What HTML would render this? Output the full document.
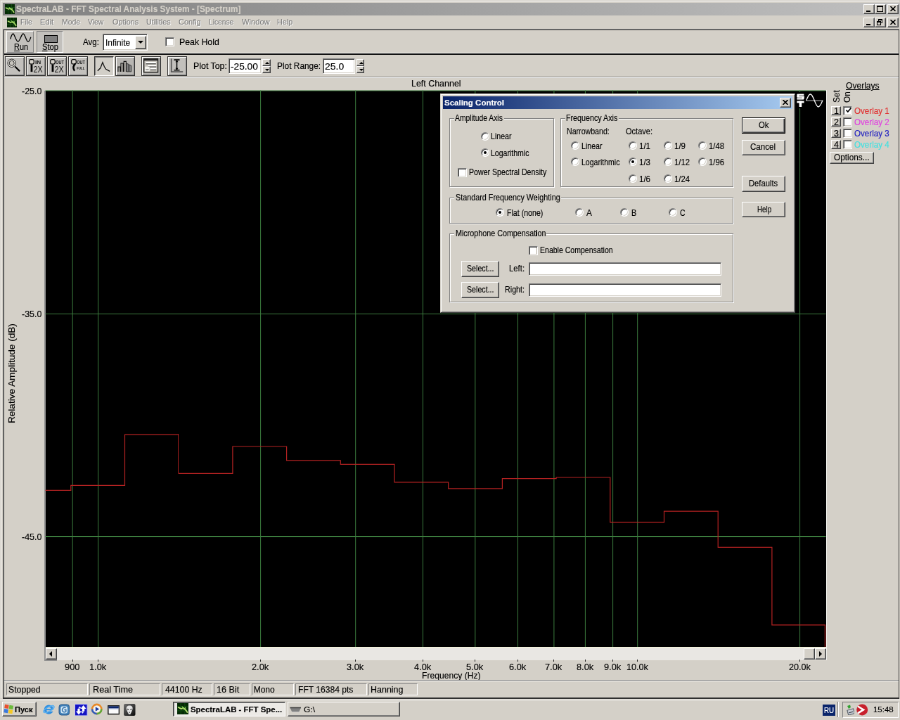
<!DOCTYPE html>
<html><head><meta charset="utf-8">
<style>
*{box-sizing:border-box;margin:0;padding:0}
html,body{width:900px;height:720px;overflow:hidden;background:#d4d0c8}
#root{position:absolute;left:0;top:0;width:1280px;height:1024px;overflow:hidden;background:#d4d0c8;transform:scale(0.703125);transform-origin:0 0;will-change:transform;font-family:"Liberation Sans",sans-serif;font-size:12px;color:#000}
.a{position:absolute}
.t{position:absolute;white-space:nowrap;transform-origin:0 50%;-webkit-text-stroke:0.15px currentColor}
.btn{background:#d4d0c8;border:1px solid;border-color:#fff #404040 #404040 #fff;box-shadow:inset -1px -1px 0 #808080, inset 1px 1px 0 #d4d0c8}
.btnd{background:#d4d0c8;border:1px solid #000;box-shadow:inset 1px 1px 0 #fff, inset -1px -1px 0 #404040, inset -2px -2px 0 #808080}
.sunk{background:#fff;border:1px solid;border-color:#808080 #fff #fff #808080;box-shadow:inset 1px 1px 0 #404040, inset -1px -1px 0 #d4d0c8}
.sunk1{border:1px solid;border-color:#808080 #fff #fff #808080}
.rais1{border:1px solid;border-color:#fff #808080 #808080 #fff}
.dis{color:#808080;text-shadow:1px 1px 0 #fff}
.grp{border:1px solid #808080;box-shadow:1px 1px 0 #fff, inset 1px 1px 0 #fff}
.radio{width:12px;height:12px;border-radius:50%;background:#fff;border:1px solid;border-color:#808080 #fff #fff #808080;box-shadow:inset 1px 1px 0 #404040, inset -1px -1px 0 #d4d0c8}
.radio.on::after{content:"";position:absolute;left:3px;top:3px;width:4px;height:4px;border-radius:50%;background:#000}
.chk{width:13px;height:13px;background:#fff;border:1px solid;border-color:#808080 #fff #fff #808080;box-shadow:inset 1px 1px 0 #404040, inset -1px -1px 0 #d4d0c8}
.tb{background:#c6c3bc;border:1px solid;border-color:#fff #404040 #404040 #fff;box-shadow:inset -1px -1px 0 #808080}
</style></head><body><div id="root">
<div class="a" style="left:1px;top:1px;width:1278px;height:1px;background:#fff"></div>
<div class="a" style="left:1px;top:1px;width:1px;height:992px;background:#fff"></div>
<div class="a" style="left:4px;top:4px;width:1276px;height:18px;background:linear-gradient(90deg,#808080,#c0c0c0)"></div>
<svg class="a" style="left:7px;top:6px" width="14" height="14"><rect width="14" height="14" fill="#052a05"/><path d="M0 4.5H14M0 9.5H14M4.5 0V14M9.5 0V14" stroke="#0f4a0f" stroke-width="1" fill="none"/><path d="M1 5L5 7L8 6L11 9L13 12" stroke="#b8e070" stroke-width="1.6" fill="none"/><path d="M6 4L8 8M10 5L11 9" stroke="#7fd04f" stroke-width="1" fill="none"/></svg>
<div class="t " style="left:22.5px;top:5.3px;font-size:12px;line-height:16px;transform:scaleX(0.985);font-weight:bold;color:#d4d0c8;">SpectraLAB - FFT Spectral Analysis System - [Spectrum]</div>
<div class="a btn" style="left:1228px;top:6px;width:16px;height:14px"></div>
<div class="a" style="left:1232px;top:15px;width:6px;height:2px;background:#000"></div>
<div class="a btn" style="left:1244px;top:6px;width:16px;height:14px"></div>
<div class="a" style="left:1247px;top:8px;width:9px;height:9px;border:1px solid #000;border-top-width:2px"></div>
<div class="a btn" style="left:1262px;top:6px;width:16px;height:14px"></div>
<svg class="a" style="left:1266px;top:9px" width="8" height="7"><path d="M0.5 0L7.5 7M7.5 0L0.5 7" stroke="#000" stroke-width="1.6" fill="none"/></svg>
<svg class="a" style="left:10px;top:25px" width="14" height="14"><rect width="14" height="14" fill="#052a05"/><path d="M0 4.5H14M0 9.5H14M4.5 0V14M9.5 0V14" stroke="#0f4a0f" stroke-width="1" fill="none"/><path d="M1 5L5 7L8 6L11 9L13 12" stroke="#b8e070" stroke-width="1.6" fill="none"/><path d="M6 4L8 8M10 5L11 9" stroke="#7fd04f" stroke-width="1" fill="none"/></svg>
<div class="t dis" style="left:29.1px;top:24.2px;font-size:11.5px;line-height:15.5px;transform:scaleX(0.914);">File</div>
<div class="t dis" style="left:56.8px;top:24.2px;font-size:11.5px;line-height:15.5px;transform:scaleX(0.962);">Edit</div>
<div class="t dis" style="left:87.7px;top:24.2px;font-size:11.5px;line-height:15.5px;transform:scaleX(0.910);">Mode</div>
<div class="t dis" style="left:125.1px;top:24.2px;font-size:11.5px;line-height:15.5px;transform:scaleX(0.904);">View</div>
<div class="t dis" style="left:159.5px;top:24.2px;font-size:11.5px;line-height:15.5px;transform:scaleX(0.940);">Options</div>
<div class="t dis" style="left:208.1px;top:24.2px;font-size:11.5px;line-height:15.5px;transform:scaleX(0.933);">Utilities</div>
<div class="t dis" style="left:254.4px;top:24.2px;font-size:11.5px;line-height:15.5px;transform:scaleX(0.954);">Config</div>
<div class="t dis" style="left:297.0px;top:24.2px;font-size:11.5px;line-height:15.5px;transform:scaleX(0.890);">License</div>
<div class="t dis" style="left:343.7px;top:24.2px;font-size:11.5px;line-height:15.5px;transform:scaleX(0.970);">Window</div>
<div class="t dis" style="left:394.2px;top:24.2px;font-size:11.5px;line-height:15.5px;transform:scaleX(0.944);">Help</div>
<div class="a btn" style="left:1228px;top:25px;width:16px;height:14px"></div>
<div class="a" style="left:1232px;top:34px;width:6px;height:2px;background:#000"></div>
<div class="a btn" style="left:1244px;top:25px;width:16px;height:14px"></div>
<div class="a" style="left:1249px;top:27px;width:6px;height:6px;border:1px solid #000;border-top-width:2px"></div>
<div class="a" style="left:1247px;top:30px;width:6px;height:6px;border:1px solid #000;border-top-width:2px;background:#d4d0c8"></div>
<div class="a btn" style="left:1262px;top:25px;width:16px;height:14px"></div>
<svg class="a" style="left:1266px;top:28px" width="8" height="7"><path d="M0.5 0L7.5 7M7.5 0L0.5 7" stroke="#000" stroke-width="1.6" fill="none"/></svg>
<div class="a" style="left:4px;top:41px;width:1275px;height:1px;background:#808080"></div>
<div class="a" style="left:4px;top:42px;width:1275px;height:1px;background:#404040"></div>
<div class="a" style="left:4px;top:42px;width:1px;height:951px;background:#808080"></div>
<div class="a" style="left:5px;top:42px;width:1px;height:951px;background:#404040"></div>
<div class="a" style="left:1278px;top:42px;width:1px;height:951px;background:#404040"></div>
<div class="a" style="left:6px;top:74.6px;width:1272px;height:1.6px;background:#fff"></div>
<div class="a" style="left:6px;top:76.2px;width:1272px;height:1.6px;background:#101010"></div>
<div class="a" style="left:6px;top:109px;width:1272px;height:1px;background:#808080"></div>
<div class="a" style="left:6px;top:110px;width:1272px;height:1px;background:#fff"></div>
<div class="a rais1" style="left:9px;top:44px;width:39px;height:31px;background:#c2c0bc"></div>
<div class="a sunk1" style="left:52px;top:44px;width:38px;height:31px;background:#c2c0bc"></div>
<svg class="a" style="left:14px;top:47px;" width="31" height="14" viewBox="0 0 31 14"><path d="M0.8 8.5 C2 4,3.3 1,4.8 1 S9 12.2,11.6 12.2 S16.5 1,19 1 S23.5 12.2,25.8 12.2 S28.8 9,29.8 5.7" stroke="#000" stroke-width="1.3" fill="none"/></svg>
<div class="t " style="left:20.0px;top:57.5px;font-size:13px;line-height:17px;transform:scaleX(0.841);"><u>R</u>un</div>
<div class="a " style="left:63px;top:50px;width:19px;height:11px;background:#808080;border:1.5px solid #000"></div>
<div class="t " style="left:60.4px;top:57.5px;font-size:13px;line-height:17px;transform:scaleX(0.856);"><u>S</u>top</div>
<div class="t " style="left:118.4px;top:51.8px;font-size:12px;line-height:16px;transform:scaleX(0.962);">Avg:</div>
<div class="a sunk" style="left:146px;top:48px;width:64px;height:24px;"></div>
<div class="t " style="left:150.0px;top:51.6px;font-size:13px;line-height:17px;transform:scaleX(0.917);">Infinite</div>
<div class="a btn" style="left:192px;top:51px;width:16px;height:19px;"></div>
<div class="a" style="left:196px;top:58px;border:4px solid transparent;border-top:4px solid #000;border-bottom:0"></div>
<div class="a chk" style="left:235px;top:53px;width:13px;height:13px;width:13px;height:13px"></div>
<div class="t " style="left:255.2px;top:51.8px;font-size:12px;line-height:16px;transform:scaleX(1.025);">Peak Hold</div>
<div class="a" style="left:7.2px;top:80px;width:28px;height:28px;background:#c2c0bc;border:1px solid #303030;box-shadow:inset 1px 1px 0 #fff, inset -1px -1px 0 #808080"></div>
<svg class="a" style="left:7.2px;top:80px" width="28" height="28" viewBox="0 0 19.7 19.7"><circle cx="6.8" cy="6.9" r="4.0" fill="#eceae4" stroke="#000" stroke-width="0.6"/><circle cx="6.8" cy="6.9" r="2.5" fill="#c8c5be" stroke="#000" stroke-width="0.55"/><path d="M10 10.2L14.8 14.9" stroke="#000" stroke-width="1.5"/></svg>
<div class="a" style="left:37.2px;top:80px;width:28px;height:28px;background:#c2c0bc;border:1px solid #303030;box-shadow:inset 1px 1px 0 #fff, inset -1px -1px 0 #808080"></div>
<svg class="a" style="left:37.2px;top:80px" width="28" height="28" viewBox="0 0 19.7 19.7"><rect x="3.3" y="3.3" width="4.6" height="4.4" rx="1.4" fill="#d4d0c8" stroke="#000" stroke-width="0.8"/><path d="M5.6 8V15.6" stroke="#000" stroke-width="2"/><text x="9.2" y="7.8" font-family="Liberation Sans" font-weight="bold" font-size="5.2" fill="#111" textLength="5.8" lengthAdjust="spacingAndGlyphs">IN</text><text x="7.4" y="15.9" font-family="Liberation Sans" font-weight="normal" font-size="8.4" fill="#111" textLength="9.2" lengthAdjust="spacingAndGlyphs">2X</text></svg>
<div class="a" style="left:67.2px;top:80px;width:28px;height:28px;background:#c2c0bc;border:1px solid #303030;box-shadow:inset 1px 1px 0 #fff, inset -1px -1px 0 #808080"></div>
<svg class="a" style="left:67.2px;top:80px" width="28" height="28" viewBox="0 0 19.7 19.7"><rect x="3.3" y="3.3" width="4.6" height="4.4" rx="1.4" fill="#d4d0c8" stroke="#000" stroke-width="0.8"/><path d="M5.6 8V15.6" stroke="#000" stroke-width="2"/><text x="8.6" y="7.8" font-family="Liberation Sans" font-weight="bold" font-size="5.2" fill="#111" textLength="8.2" lengthAdjust="spacingAndGlyphs">OUT</text><text x="7.4" y="15.9" font-family="Liberation Sans" font-weight="normal" font-size="8.4" fill="#111" textLength="9.2" lengthAdjust="spacingAndGlyphs">2X</text></svg>
<div class="a" style="left:97.2px;top:80px;width:28px;height:28px;background:#c2c0bc;border:1px solid #303030;box-shadow:inset 1px 1px 0 #fff, inset -1px -1px 0 #808080"></div>
<svg class="a" style="left:97.2px;top:80px" width="28" height="28" viewBox="0 0 19.7 19.7"><rect x="3.3" y="3.3" width="4.6" height="4.4" rx="1.4" fill="#d4d0c8" stroke="#000" stroke-width="0.8"/><path d="M7 7.6C5 9.5 4.6 12 6.4 14.6" stroke="#000" stroke-width="1.8" fill="none"/><text x="8.6" y="7.8" font-family="Liberation Sans" font-weight="bold" font-size="5.2" fill="#111" textLength="8.2" lengthAdjust="spacingAndGlyphs">OUT</text><text x="8.6" y="13.6" font-family="Liberation Sans" font-weight="bold" font-size="4.2" fill="#111" textLength="7.8" lengthAdjust="spacingAndGlyphs">FULL</text></svg>
<div class="a" style="left:133.9px;top:80px;width:28px;height:28px;background:#d2cfc8;border:1px solid;border-color:#303030 #fff #fff #303030;box-shadow:inset 1px 1px 0 #808080"></div>
<svg class="a" style="left:133.9px;top:80px" width="28" height="28" viewBox="0 0 19.7 19.7"><path d="M3.4 14.6L6.2 11.8L8.4 6.2L10.2 10.6L11.6 12.8L15.6 15" stroke="#111" stroke-width="0.9" fill="none"/></svg>
<div class="a" style="left:163.9px;top:80px;width:28px;height:28px;background:#b8b6b2;border:1px solid #303030;box-shadow:inset 1px 1px 0 #fff, inset -1px -1px 0 #808080"></div>
<svg class="a" style="left:163.9px;top:80px" width="28" height="28" viewBox="0 0 19.7 19.7"><path d="M2.8 15.4V10.6H4.8V15.4M5.6 15.4V7H7.8V15.4M8.6 15.4V5.2H10.8V15.4" stroke="#111" stroke-width="0.8" fill="#c8c5be"/><path d="M11.2 15.4V7.2L13.4 8V15.4ZM13.8 15.4V8.4L16 9.4V15.4Z" stroke="#333" stroke-width="0.7" fill="#888"/></svg>
<div class="a" style="left:200.8px;top:80px;width:28px;height:28px;background:#b8b6b2;border:1px solid #303030;box-shadow:inset 1px 1px 0 #fff, inset -1px -1px 0 #808080"></div>
<svg class="a" style="left:200.8px;top:80px" width="28" height="28" viewBox="0 0 19.7 19.7"><rect x="2.6" y="2.6" width="14" height="13.4" fill="#c8c5be" stroke="#111" stroke-width="0.9"/><rect x="2.6" y="2.6" width="14" height="1.8" fill="#222"/><path d="M4.6 6.4H14.6M6.6 9.4H15M9 12.4H15" stroke="#fff" stroke-width="1.5"/><path d="M4.6 7.6H14.6M6.6 10.6H15M9 13.6H15" stroke="#222" stroke-width="0.7"/><rect x="3.6" y="10.4" width="4.6" height="4.6" fill="#f4f4f0"/><path d="M4.4 13.4H7.4" stroke="#666" stroke-width="0.8"/></svg>
<div class="a" style="left:237.9px;top:80px;width:28px;height:28px;background:#c2c0bc;border:1px solid #303030;box-shadow:inset 1px 1px 0 #fff, inset -1px -1px 0 #808080"></div>
<svg class="a" style="left:237.9px;top:80px" width="28" height="28" viewBox="0 0 19.7 19.7"><path d="M4 2.4V15.6H15.6" stroke="#555" stroke-width="1.2" fill="none"/><path d="M6.6 3.6H12.4M6.6 13.9H12.4M9.5 3.6V13.9" stroke="#000" stroke-width="1.1" fill="none"/><path d="M8 5.8L9.5 4L11 5.8ZM8 11.8L9.5 13.6L11 11.8Z" fill="#000"/></svg>
<div class="t " style="left:275.4px;top:86.3px;font-size:12px;line-height:16px;transform:scaleX(1.031);">Plot Top:</div>
<div class="a sunk" style="left:325px;top:83px;width:47px;height:22px;"></div>
<div class="t " style="left:328.0px;top:85.7px;font-size:13px;line-height:17px;transform:scaleX(1.053);">-25.00</div>
<div class="a btn" style="left:373px;top:84px;width:12px;height:10px;"></div>
<div class="a btn" style="left:373px;top:94px;width:12px;height:10px;"></div>
<div class="t " style="left:393.5px;top:86.3px;font-size:12px;line-height:16px;transform:scaleX(0.991);">Plot Range:</div>
<div class="a sunk" style="left:459px;top:83px;width:46px;height:22px;"></div>
<div class="t " style="left:462.3px;top:85.7px;font-size:13px;line-height:17px;transform:scaleX(1.074);">25.0</div>
<div class="a btn" style="left:507px;top:84px;width:11px;height:10px;"></div>
<div class="a btn" style="left:507px;top:94px;width:11px;height:10px;"></div>
<div class="a" style="left:377px;top:88px;border:3px solid transparent;border-bottom:3px solid #000;border-top:0"></div>
<div class="a" style="left:377px;top:98px;border:3px solid transparent;border-top:3px solid #000;border-bottom:0"></div>
<div class="a" style="left:511px;top:88px;border:3px solid transparent;border-bottom:3px solid #000;border-top:0"></div>
<div class="a" style="left:511px;top:98px;border:3px solid transparent;border-top:3px solid #000;border-bottom:0"></div>
<div class="t " style="left:585.0px;top:111.0px;font-size:12px;line-height:16px;transform:scaleX(1.037);">Left Channel</div>
<div class="a" style="left:63.0px;top:128.5px;width:2px;height:810.5px;background:#909090"></div>
<div class="a" style="left:64.5px;top:128.5px;width:1110.0px;height:791.5px;background:#000"></div>
<svg class="a" style="left:0;top:0" width="1280" height="1024"><path d="M103.2 128.5V920 M139.7 128.5V920 M370.6 128.5V920 M505.7 128.5V920 M601.5 128.5V920 M675.8 128.5V920 M736.5 128.5V920 M787.9 128.5V920 M832.4 128.5V920 M871.6 128.5V920 M906.7 128.5V920 M1137.6 128.5V920 M64.5 129.0H1174.5 M64.5 446.5H1174.5 M64.5 763.5H1174.5" stroke="#3c7c3e" stroke-width="1" fill="none"/><path d="M64.5 697.3V697.3H100.8V690.3H177.5V618.2H254.2V673.4H330.9V635.0H407.6V654.8H484.3V660.3H561.0V685.9H637.7V694.8H714.4V680.7H791.1V679.0H867.8V742.8H944.5V727.2H1021.2V778.4H1097.9V888.9H1173.4V920" stroke="#b42222" stroke-width="1.2" fill="none"/></svg>
<div class="t " style="left:30.5px;top:122.0px;font-size:12px;line-height:16px;transform:scaleX(1.035);">-25.0</div>
<div class="t " style="left:30.5px;top:439.0px;font-size:12px;line-height:16px;transform:scaleX(1.035);">-35.0</div>
<div class="t " style="left:30.5px;top:756.1px;font-size:12px;line-height:16px;transform:scaleX(1.035);">-45.0</div>
<div class="t" style="left:9px;top:602px;font-size:12px;line-height:16px;transform-origin:0 0;transform:rotate(-90deg) scaleX(1.131);margin-top:0">Relative Amplitude (dB)</div>
<div class="a" style="left:64.5px;top:920px;width:1110.0px;height:19px;background:#e9e7e3"></div>
<div class="a" style="left:64.5px;top:920px;width:1110.0px;height:1px;background:#f4f4d8"></div>
<div class="a" style="left:63.0px;top:938px;width:18px;height:1.5px;background:#909090"></div>
<div class="a btn" style="left:64.5px;top:921.5px;width:16px;height:16px"></div>
<div class="a btn" style="left:1158.5px;top:921.5px;width:16px;height:16px"></div>
<div class="a btn" style="left:1142.5px;top:921.5px;width:16px;height:16px"></div>
<div class="a" style="left:69.5px;top:925.5px;border:4px solid transparent;border-right:4px solid #000;border-left:0"></div>
<div class="a" style="left:1164.5px;top:925.5px;border:4px solid transparent;border-left:4px solid #000;border-right:0"></div>
<div class="t " style="left:91.9px;top:940.6px;font-size:12px;line-height:16px;transform:scaleX(1.070);">900</div>
<div class="a" style="left:102.7px;top:938px;width:1px;height:3px;background:#222"></div>
<div class="t " style="left:127.1px;top:940.6px;font-size:12px;line-height:16px;transform:scaleX(1.064);">1.0k</div>
<div class="a" style="left:139.2px;top:938px;width:1px;height:3px;background:#222"></div>
<div class="t " style="left:358.0px;top:940.6px;font-size:12px;line-height:16px;transform:scaleX(1.064);">2.0k</div>
<div class="a" style="left:370.1px;top:938px;width:1px;height:3px;background:#222"></div>
<div class="t " style="left:493.0px;top:940.6px;font-size:12px;line-height:16px;transform:scaleX(1.064);">3.0k</div>
<div class="a" style="left:505.2px;top:938px;width:1px;height:3px;background:#222"></div>
<div class="t " style="left:588.8px;top:940.6px;font-size:12px;line-height:16px;transform:scaleX(1.064);">4.0k</div>
<div class="a" style="left:601.0px;top:938px;width:1px;height:3px;background:#222"></div>
<div class="t " style="left:663.2px;top:940.6px;font-size:12px;line-height:16px;transform:scaleX(1.064);">5.0k</div>
<div class="a" style="left:675.3px;top:938px;width:1px;height:3px;background:#222"></div>
<div class="t " style="left:723.9px;top:940.6px;font-size:12px;line-height:16px;transform:scaleX(1.064);">6.0k</div>
<div class="a" style="left:736.0px;top:938px;width:1px;height:3px;background:#222"></div>
<div class="t " style="left:775.3px;top:940.6px;font-size:12px;line-height:16px;transform:scaleX(1.064);">7.0k</div>
<div class="a" style="left:787.4px;top:938px;width:1px;height:3px;background:#222"></div>
<div class="t " style="left:819.7px;top:940.6px;font-size:12px;line-height:16px;transform:scaleX(1.064);">8.0k</div>
<div class="a" style="left:831.9px;top:938px;width:1px;height:3px;background:#222"></div>
<div class="t " style="left:859.0px;top:940.6px;font-size:12px;line-height:16px;transform:scaleX(1.064);">9.0k</div>
<div class="a" style="left:871.1px;top:938px;width:1px;height:3px;background:#222"></div>
<div class="t " style="left:890.7px;top:940.6px;font-size:12px;line-height:16px;transform:scaleX(1.054);">10.0k</div>
<div class="a" style="left:906.2px;top:938px;width:1px;height:3px;background:#222"></div>
<div class="t " style="left:1121.5px;top:940.6px;font-size:12px;line-height:16px;transform:scaleX(1.054);">20.0k</div>
<div class="a" style="left:1137.1px;top:938px;width:1px;height:3px;background:#222"></div>
<div class="t " style="left:600.2px;top:953.0px;font-size:12px;line-height:16px;transform:scaleX(1.010);">Frequency (Hz)</div>
<div class="a" style="left:1131px;top:131px;width:42px;height:23px;background:#000"></div>
<div class="a" style="left:1174.5px;top:128px;width:1.5px;height:811px;background:#f4f4f0"></div>
<svg class="a" style="left:1133px;top:133px" width="12" height="20"><g fill="#fff"><rect x="1" y="0.6" width="9.4" height="2.2"/><rect x="0.4" y="1" width="3" height="4"/><rect x="0.6" y="3.6" width="10" height="2.2"/><rect x="7.6" y="4" width="3" height="4"/><rect x="0.4" y="6.4" width="9.6" height="2.2"/><rect x="0.4" y="10.6" width="10.2" height="2.8"/><rect x="3.6" y="10.6" width="3.6" height="8.4"/></g></svg>
<svg class="a" style="left:1146px;top:132px" width="26" height="22"><path d="M0.5 11.2H24.5" stroke="#a8a8a8" stroke-width="1.2"/><path d="M0.8 11C3 5,4.8 2,6.5 2S10 5,12.3 11S16 20,17.7 20S21.5 17,23.8 11" stroke="#fff" stroke-width="1.3" fill="none"/></svg>
<div class="t " style="left:1203.0px;top:114.4px;font-size:12px;line-height:16px;transform:scaleX(1.006);text-decoration:underline">Overlays</div>
<div class="t" style="left:1183.3px;top:145.6px;font-size:12px;line-height:14px;transform-origin:0 0;transform:rotate(-90deg) scaleX(0.980)">Set</div>
<div class="t" style="left:1198.1px;top:145.6px;font-size:12px;line-height:14px;transform-origin:0 0;transform:rotate(-90deg) scaleX(0.980)">On</div>
<div class="a btn" style="left:1182.0px;top:150.6px;width:14px;height:13px"></div>
<div class="t " style="left:1185.9px;top:149.5px;font-size:12px;line-height:16px;transform:scaleX(1.045);">1</div>
<div class="a chk" style="left:1199.1px;top:150.6px"></div>
<div class="t " style="left:1214.9px;top:149.8px;font-size:12px;line-height:16px;transform:scaleX(0.967);color:#e03030;">Overlay 1</div>
<div class="a btn" style="left:1182.0px;top:166.6px;width:14px;height:13px"></div>
<div class="t " style="left:1185.9px;top:165.6px;font-size:12px;line-height:16px;transform:scaleX(1.045);">2</div>
<div class="a chk" style="left:1199.1px;top:166.6px"></div>
<div class="t " style="left:1214.9px;top:165.9px;font-size:12px;line-height:16px;transform:scaleX(0.967);color:#e040e0;">Overlay 2</div>
<div class="a btn" style="left:1182.0px;top:182.7px;width:14px;height:13px"></div>
<div class="t " style="left:1185.9px;top:181.6px;font-size:12px;line-height:16px;transform:scaleX(1.045);">3</div>
<div class="a chk" style="left:1199.1px;top:182.7px"></div>
<div class="t " style="left:1214.9px;top:181.9px;font-size:12px;line-height:16px;transform:scaleX(0.967);color:#2020c0;">Overlay 3</div>
<div class="a btn" style="left:1182.0px;top:198.7px;width:14px;height:13px"></div>
<div class="t " style="left:1185.9px;top:197.6px;font-size:12px;line-height:16px;transform:scaleX(1.045);">4</div>
<div class="a chk" style="left:1199.1px;top:198.7px"></div>
<div class="t " style="left:1214.9px;top:197.9px;font-size:12px;line-height:16px;transform:scaleX(0.967);color:#40e0e0;">Overlay 4</div>
<svg class="a" style="left:1201.5px;top:152.2px" width="10" height="10"><path d="M1.5 4.5L3.8 7L8.5 1.5" stroke="#000" stroke-width="1.8" fill="none"/></svg>
<div class="a btn" style="left:1180px;top:216px;width:63px;height:17px;"></div>
<div class="t " style="left:1185.6px;top:216.0px;font-size:12px;line-height:16px;transform:scaleX(0.983);">Options...</div>
<div class="a" style="left:626px;top:133px;width:505px;height:312px;background:#d4d0c8;border:1px solid;border-color:#d4d0c8 #404040 #404040 #d4d0c8;box-shadow:inset 1px 1px 0 #fff, inset -1px -1px 0 #808080"></div>
<div class="a" style="left:630px;top:137px;width:497px;height:18px;background:linear-gradient(90deg,#0a246a,#a6caf0)"></div>
<div class="t " style="left:631.5px;top:138.9px;font-size:11px;line-height:15px;transform:scaleX(1.045);font-weight:bold;color:#fff;">Scaling Control</div>
<div class="a btn" style="left:1109px;top:139px;width:16px;height:14px"></div>
<svg class="a" style="left:1113px;top:142px" width="8" height="7"><path d="M0.5 0L7.5 7M7.5 0L0.5 7" stroke="#000" stroke-width="1.6" fill="none"/></svg>
<div class="a grp" style="left:639px;top:168px;width:149px;height:98px;"></div>
<div class="a" style="left:646px;top:166px;width:71px;height:6px;background:#d4d0c8"></div>
<div class="t " style="left:647.2px;top:159.9px;font-size:12px;line-height:16px;transform:scaleX(0.862);">Amplitude Axis</div>
<div class="a radio" style="left:684px;top:188px"></div>
<div class="t " style="left:698.4px;top:186.4px;font-size:12px;line-height:16px;transform:scaleX(0.883);">Linear</div>
<div class="a radio on" style="left:684px;top:211px"></div>
<div class="t " style="left:698.4px;top:210.0px;font-size:12px;line-height:16px;transform:scaleX(0.878);">Logarithmic</div>
<div class="a chk" style="left:651px;top:239px;width:14px;height:14px;width:13px;height:13px"></div>
<div class="t " style="left:666.5px;top:237.3px;font-size:12px;line-height:16px;transform:scaleX(0.884);">Power Spectral Density</div>
<div class="a grp" style="left:797px;top:168px;width:246px;height:98px;"></div>
<div class="a" style="left:804px;top:166px;width:76px;height:6px;background:#d4d0c8"></div>
<div class="t " style="left:805.3px;top:159.9px;font-size:12px;line-height:16px;transform:scaleX(0.893);">Frequency Axis</div>
<div class="t " style="left:805.9px;top:178.7px;font-size:12px;line-height:16px;transform:scaleX(0.884);">Narrowband:</div>
<div class="t " style="left:889.8px;top:178.7px;font-size:12px;line-height:16px;transform:scaleX(0.918);">Octave:</div>
<div class="a radio" style="left:812px;top:201px"></div>
<div class="t " style="left:827.2px;top:200.0px;font-size:12px;line-height:16px;transform:scaleX(0.883);">Linear</div>
<div class="a radio" style="left:812px;top:224px"></div>
<div class="t " style="left:827.2px;top:223.4px;font-size:12px;line-height:16px;transform:scaleX(0.878);">Logarithmic</div>
<div class="a radio" style="left:894px;top:201px"></div>
<div class="t " style="left:909.2px;top:200.0px;font-size:12px;line-height:16px;transform:scaleX(0.960);">1/1</div>
<div class="a radio on" style="left:894px;top:224px"></div>
<div class="t " style="left:909.2px;top:223.4px;font-size:12px;line-height:16px;transform:scaleX(0.960);">1/3</div>
<div class="a radio" style="left:894px;top:248px"></div>
<div class="t " style="left:909.2px;top:246.7px;font-size:12px;line-height:16px;transform:scaleX(0.960);">1/6</div>
<div class="a radio" style="left:944px;top:201px"></div>
<div class="t " style="left:958.9px;top:200.0px;font-size:12px;line-height:16px;transform:scaleX(0.960);">1/9</div>
<div class="a radio" style="left:944px;top:224px"></div>
<div class="t " style="left:958.9px;top:223.4px;font-size:12px;line-height:16px;transform:scaleX(0.943);">1/12</div>
<div class="a radio" style="left:944px;top:248px"></div>
<div class="t " style="left:958.9px;top:246.7px;font-size:12px;line-height:16px;transform:scaleX(0.943);">1/24</div>
<div class="a radio" style="left:993px;top:201px"></div>
<div class="t " style="left:1008.1px;top:200.0px;font-size:12px;line-height:16px;transform:scaleX(0.943);">1/48</div>
<div class="a radio" style="left:993px;top:224px"></div>
<div class="t " style="left:1008.1px;top:223.4px;font-size:12px;line-height:16px;transform:scaleX(0.943);">1/96</div>
<div class="a grp" style="left:639px;top:281px;width:404px;height:37px;"></div>
<div class="a" style="left:646px;top:279px;width:152px;height:6px;background:#d4d0c8"></div>
<div class="t " style="left:647.5px;top:272.9px;font-size:12px;line-height:16px;transform:scaleX(0.900);">Standard Frequency Weighting</div>
<div class="a radio on" style="left:705px;top:296px"></div>
<div class="t " style="left:720.6px;top:294.5px;font-size:12px;line-height:16px;transform:scaleX(0.885);">Flat (none)</div>
<div class="a radio" style="left:818px;top:296px"></div>
<div class="t " style="left:833.5px;top:294.5px;font-size:12px;line-height:16px;transform:scaleX(0.978);">A</div>
<div class="a radio" style="left:882px;top:296px"></div>
<div class="t " style="left:897.5px;top:294.5px;font-size:12px;line-height:16px;transform:scaleX(0.907);">B</div>
<div class="a radio" style="left:951px;top:296px"></div>
<div class="t " style="left:966.6px;top:294.5px;font-size:12px;line-height:16px;transform:scaleX(0.870);">C</div>
<div class="a grp" style="left:639px;top:332px;width:404px;height:98px;"></div>
<div class="a" style="left:646px;top:330px;width:131px;height:6px;background:#d4d0c8"></div>
<div class="t " style="left:647.5px;top:323.8px;font-size:12px;line-height:16px;transform:scaleX(0.896);">Microphone Compensation</div>
<div class="a chk" style="left:752px;top:350px;width:14px;height:14px;width:13px;height:13px"></div>
<div class="t " style="left:767.8px;top:348.2px;font-size:12px;line-height:16px;transform:scaleX(0.878);">Enable Compensation</div>
<div class="a btn" style="left:656px;top:371px;width:54px;height:23px;"></div>
<div class="t " style="left:663.7px;top:374.1px;font-size:12px;line-height:16px;transform:scaleX(0.889);">Select...</div>
<div class="t " style="left:724.0px;top:374.1px;font-size:12px;line-height:16px;transform:scaleX(0.944);">Left:</div>
<div class="a sunk" style="left:752px;top:373px;width:274px;height:19px;"></div>
<div class="a btn" style="left:656px;top:401px;width:54px;height:23px;"></div>
<div class="t " style="left:663.7px;top:404.3px;font-size:12px;line-height:16px;transform:scaleX(0.889);">Select...</div>
<div class="t " style="left:718.0px;top:404.3px;font-size:12px;line-height:16px;transform:scaleX(0.894);">Right:</div>
<div class="a sunk" style="left:752px;top:403px;width:274px;height:19px;"></div>
<div class="a btnd" style="left:1055px;top:167px;width:62px;height:23px;"></div>
<div class="t " style="left:1078.7px;top:169.9px;font-size:12px;line-height:16px;transform:scaleX(0.937);">Ok</div>
<div class="a btn" style="left:1055px;top:199px;width:62px;height:22px;"></div>
<div class="t " style="left:1067.3px;top:201.2px;font-size:12px;line-height:16px;transform:scaleX(0.963);">Cancel</div>
<div class="a btn" style="left:1055px;top:250px;width:62px;height:23px;"></div>
<div class="t " style="left:1064.7px;top:253.1px;font-size:12px;line-height:16px;transform:scaleX(0.934);">Defaults</div>
<div class="a btn" style="left:1055px;top:287px;width:62px;height:22px;"></div>
<div class="t " style="left:1076.7px;top:289.6px;font-size:12px;line-height:16px;transform:scaleX(0.813);">Help</div>
<div class="a" style="left:6px;top:967px;width:1272px;height:1px;background:#808080"></div>
<div class="a" style="left:6px;top:968px;width:1272px;height:1px;background:#fff"></div>
<div class="a sunk1" style="left:9px;top:972px;width:116px;height:17px;"></div>
<div class="t " style="left:11.7px;top:972.6px;font-size:12px;line-height:16px;transform:scaleX(1.021);">Stopped</div>
<div class="a sunk1" style="left:127px;top:972px;width:101px;height:17px;"></div>
<div class="t " style="left:131.8px;top:972.6px;font-size:12px;line-height:16px;transform:scaleX(1.056);">Real Time</div>
<div class="a sunk1" style="left:230px;top:972px;width:72px;height:17px;"></div>
<div class="t " style="left:235.0px;top:972.6px;font-size:12px;line-height:16px;transform:scaleX(1.027);">44100 Hz</div>
<div class="a sunk1" style="left:304px;top:972px;width:52px;height:17px;"></div>
<div class="t " style="left:308.1px;top:972.6px;font-size:12px;line-height:16px;transform:scaleX(1.052);">16 Bit</div>
<div class="a sunk1" style="left:358px;top:972px;width:60px;height:17px;"></div>
<div class="t " style="left:360.7px;top:972.6px;font-size:12px;line-height:16px;transform:scaleX(1.000);">Mono</div>
<div class="a sunk1" style="left:420px;top:972px;width:102px;height:17px;"></div>
<div class="t " style="left:424.2px;top:972.6px;font-size:12px;line-height:16px;transform:scaleX(1.007);">FFT 16384 pts</div>
<div class="a sunk1" style="left:524px;top:972px;width:70px;height:17px;"></div>
<div class="t " style="left:527.1px;top:972.6px;font-size:12px;line-height:16px;transform:scaleX(1.040);">Hanning</div>
<div class="a" style="left:4px;top:992px;width:1275px;height:2px;background:#303030"></div>
<div class="a" style="left:0;top:994px;width:1280px;height:1px;background:#d4d0c8"></div>
<div class="a" style="left:0;top:995px;width:1280px;height:1px;background:#fff"></div>
<div class="a btn" style="left:3px;top:998px;width:49px;height:21px;"></div>
<svg class="a" style="left:4px;top:1000px;" width="16" height="17" viewBox="0 0 16 17"><g transform="translate(0.5,1) skewY(9) skewX(-8)"><rect x="2.6" y="0.4" width="5.6" height="5.4" fill="#e8502e"/><rect x="9" y="0.4" width="5.6" height="5.4" fill="#6aba3a"/><rect x="2.6" y="6.8" width="5.6" height="5.4" fill="#3a78dc"/><rect x="9" y="6.8" width="5.6" height="5.4" fill="#f4c824"/></g></svg>
<div class="t " style="left:21.1px;top:1001.9px;font-size:11.5px;line-height:15.5px;transform:scaleX(0.960);font-weight:bold;">Пуск</div>
<svg class="a" style="left:61px;top:1000px;" width="17" height="18" viewBox="0 0 17 18"><circle cx="8.4" cy="9.2" r="6.6" fill="#2f8ee0"/><circle cx="8.4" cy="9.2" r="3.2" fill="#d4d0c8"/><rect x="8.4" y="9.6" width="7" height="2.2" fill="#d4d0c8"/><rect x="3" y="8.2" width="10.6" height="2" fill="#2f8ee0"/><ellipse cx="8.4" cy="8.6" rx="8.4" ry="3" fill="none" stroke="#5ab0f0" stroke-width="1.5" transform="rotate(-28 8.4 8.6)"/></svg>
<svg class="a" style="left:83px;top:1001px;" width="17" height="17" viewBox="0 0 17 17"><rect x="1" y="1" width="14.6" height="15" rx="3.4" fill="#3f7fb8" stroke="#2a5888" stroke-width="1"/><rect x="3.4" y="3.4" width="9.6" height="10" rx="2.6" fill="#d4e8f6"/><path d="M10.6 5.6C7 4.6 5 7 5.6 9.6C6.2 12 9.4 12.4 10.8 11V8.4H8.4" stroke="#3570a8" stroke-width="1.5" fill="none"/><path d="M13 6L16.4 8L13 10Z" fill="#3f7fb8"/></svg>
<svg class="a" style="left:106px;top:1001px;" width="19" height="17" viewBox="0 0 19 17"><rect x="0.5" y="0.5" width="17.6" height="16.4" fill="#1414c4" stroke="#c4c4f4" stroke-width="1"/><path d="M12.6 2L16.6 7H14.2V10.4H11V7H8.6Z" fill="#fff"/><path d="M6 15.4L2 10.4H4.4V7H7.6V10.4H10Z" fill="#fff"/><path d="M7.4 3.4L5 6.6H9.8Z" fill="#e8e8ff"/><path d="M11.4 14L9 10.8H13.8Z" fill="#e8e8ff"/></svg>
<svg class="a" style="left:129px;top:1000px;" width="17" height="17" viewBox="0 0 17 17"><circle cx="8.7" cy="8.5" r="6.6" fill="#f4f4f4" stroke="#e88a28" stroke-width="2.6"/><path d="M15.3 8.5A6.6 6.6 0 0 1 8.7 15.1" stroke="#5aa83a" stroke-width="2.6" fill="none"/><path d="M8.7 15.1A6.6 6.6 0 0 1 2.1 8.5" stroke="#2c5cc0" stroke-width="2.6" fill="none"/><path d="M6.8 5.2L12.2 8.5L6.8 11.8Z" fill="#1c3ca0"/></svg>
<svg class="a" style="left:153px;top:1003px;" width="17" height="14" viewBox="0 0 17 14"><rect x="0.8" y="0.8" width="15.6" height="11.8" fill="#fbfbfb" stroke="#181818" stroke-width="1.5"/><rect x="1.4" y="1.4" width="14.4" height="3" fill="#0a246a"/><rect x="1.4" y="4.4" width="14.4" height="1" fill="#8090c0"/></svg>
<svg class="a" style="left:176px;top:1001px;" width="17" height="17" viewBox="0 0 17 17"><defs><linearGradient id="sk" x1="0" y1="0" x2="1" y2="1"><stop offset="0" stop-color="#707070"/><stop offset="1" stop-color="#080808"/></linearGradient></defs><rect width="16.5" height="17" rx="2" fill="url(#sk)"/><path d="M8.2 2.4C4.4 2.4 3.2 4.8 4 8C4.8 11 6.4 13 7 15H9.4C10 13 11.6 11 12.4 8C13.2 4.8 12 2.4 8.2 2.4Z" fill="#e4e4e4"/><path d="M5.2 6.4L7.4 8.6L5.6 9.2ZM11.2 6.4L9 8.6L10.8 9.2Z" fill="#202020"/><path d="M7.6 11.4H8.8V13H7.6Z" fill="#404040"/></svg>
<div class="a " style="left:246px;top:998px;width:160px;height:21px;background:#eceae6;border:1px solid;border-color:#404040 #fff #fff #404040;box-shadow:inset 1px 1px 0 #808080"></div>
<svg class="a" style="left:252px;top:1000px" width="16" height="16" viewBox="0 0 14 14"><rect width="14" height="14" fill="#052a05"/><path d="M0 4.5H14M0 9.5H14M4.5 0V14M9.5 0V14" stroke="#0f4a0f" stroke-width="1" fill="none"/><path d="M1 5L5 7L8 6L11 9L13 12" stroke="#b8e070" stroke-width="1.6" fill="none"/><path d="M6 4L8 8M10 5L11 9" stroke="#7fd04f" stroke-width="1" fill="none"/></svg>
<div class="t " style="left:270.6px;top:1002.4px;font-size:11px;line-height:15px;transform:scaleX(1.039);font-weight:bold;">SpectraLAB - FFT Spe...</div>
<div class="a btn" style="left:409px;top:998px;width:160px;height:21px;"></div>
<svg class="a" style="left:412px;top:1004px;" width="17" height="10" viewBox="0 0 17 10"><path d="M0.5 2.5H16L13.5 8H3Z" fill="#808080"/><path d="M0.5 2.5H16" stroke="#404040" stroke-width="1.5"/><path d="M3.5 8.5H13" stroke="#c0c0c0"/></svg>
<div class="t " style="left:431.9px;top:1002.4px;font-size:11px;line-height:15px;transform:scaleX(1.096);">G:\</div>
<div class="a " style="left:1170px;top:1002px;width:18px;height:16px;background:#0a246a"></div>
<div class="t " style="left:1172.0px;top:1002.7px;font-size:11px;line-height:15px;transform:scaleX(0.886);color:#fff;">RU</div>
<div class="a" style="left:1191px;top:998px;width:1px;height:22px;background:#808080"></div>
<div class="a" style="left:1192px;top:998px;width:1px;height:22px;background:#fff"></div>
<div class="a sunk1" style="left:1198px;top:998px;width:80px;height:23px;"></div>
<svg class="a" style="left:1202px;top:1002px;" width="13" height="15" viewBox="0 0 13 15"><path d="M3 2L7 0.5L8 4L5 6Z" fill="#30a030"/><rect x="3.5" y="7" width="9" height="7" fill="#c8ccd4" stroke="#505860" transform="rotate(-15 8 10)"/><path d="M5 11H11" stroke="#303840" transform="rotate(-15 8 10)"/></svg>
<svg class="a" style="left:1218px;top:1001px;" width="17" height="17" viewBox="0 0 17 17"><circle cx="8.2" cy="8.4" r="8" fill="#c8202c"/><path d="M2 3.5L10 8.4L2 13.3" stroke="#fff" stroke-width="2.6" fill="none"/><path d="M8.5 4L15 8.4L8.5 12.8" stroke="#fff" stroke-width="0" fill="none"/></svg>
<div class="t " style="left:1241.7px;top:1002.4px;font-size:11px;line-height:15px;transform:scaleX(1.039);">15:48</div>
</div></body></html>
